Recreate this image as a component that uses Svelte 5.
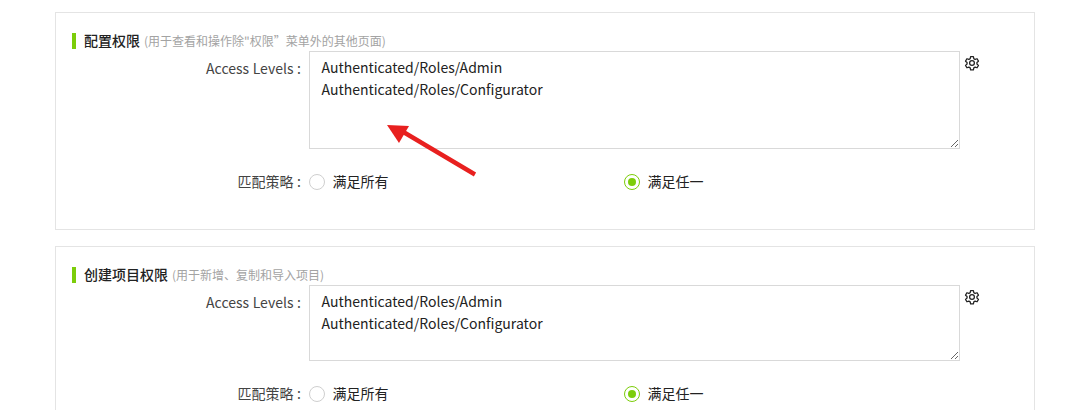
<script>
  const cards = [
    { title: '配置权限', hint: '(用于查看和操作除"权限”菜单外的其他页面)', cls: 'tall' },
    { title: '创建项目权限', hint: '(用于新增、复制和导入项目)', cls: 'short' }
  ];
  const value = 'Authenticated/Roles/Admin\nAuthenticated/Roles/Configurator';
</script>

<main class="page">
  {#each cards as card}
    <section class="card">
      <h3 class="heading"><span class="title">{card.title}</span><span class="hint">{card.hint}</span></h3>
      <div class="row levels">
        <span class="label">Access Levels :</span>
        <textarea class="area {card.cls}" readonly {value}></textarea>
        <svg class="gear" viewBox="0 0 24 24" width="16" height="16" fill="none" stroke="#222" stroke-width="1.9" stroke-linejoin="round">
          <path d="M9.9 2.5h4.2l.6 3 2 1.15 2.9-1 2.1 3.6-2.3 2v2.3l2.3 2-2.1 3.6-2.9-1-2 1.15-.6 3H9.9l-.6-3-2-1.15-2.9 1-2.1-3.6 2.3-2v-2.3l-2.3-2 2.1-3.6 2.9 1 2-1.15z"/>
          <circle cx="12" cy="12" r="3.6"/>
        </svg>
      </div>
      <div class="row match">
        <span class="label">匹配策略 :</span>
        <div class="options">
          <label class="option"><span class="radio"></span>满足所有</label>
          <label class="option"><span class="radio on"></span>满足任一</label>
        </div>
      </div>
    </section>
  {/each}
  <svg class="arrow" width="110" height="70" viewBox="380 118 110 70">
    <path d="M475 174.5 L400 130" stroke="#e8201f" stroke-width="4.4" fill="none"/>
    <polygon points="387,125 409,126 399,143" fill="#e8201f"/>
  </svg>
</main>

<style>
  :global(body) {
    margin: 0;
    background: #fff;
    font-family: "Noto Sans CJK SC", "Noto Sans", sans-serif;
    font-size: 14px;
    color: #333;
  }
  .page {
    position: relative;
    width: 980px;
    height: 398px;
    padding: 12px 55px 0;
    overflow: hidden;
  }
  .card {
    box-sizing: border-box;
    border: 1px solid #e4e4e4;
    height: 218px;
    padding: 20px 16px 0;
    margin-bottom: 16px;
  }
  .heading {
    display: flex;
    align-items: center;
    margin: 0;
    height: 16px;
    padding: 0 0 2px 8px;
    box-sizing: border-box;
    border-left: 4px solid #7ccd0a;
    font-weight: 400;
    font-size: 14px;
  }
  .title {
    color: #222;
    font-weight: 500;
    margin-right: 4px;
  }
  .hint {
    color: #a3a3a3;
    font-size: 12px;
  }
  .row {
    display: flex;
    margin-left: -16px;
  }
  .levels {
    margin-top: 2px;
    align-items: flex-start;
  }
  .label {
    box-sizing: border-box;
    width: 245px;
    flex: none;
    text-align: right;
    line-height: 22px;
    color: #444;
    word-spacing: 0.5px;
  }
  .levels .label {
    padding-top: 6px;
  }
  .area {
    box-sizing: border-box;
    display: block;
    width: 651px;
    margin: 0 0 0 8px;
    padding: 4px 11.5px;
    border: 1px solid #d9d9d9;
    border-radius: 0;
    outline: none;
    font: inherit;
    line-height: 22px;
    color: #222;
    background: #fff;
  }
  .tall { height: 98px; }
  .short { height: 76px; }
  .gear {
    margin: 4px 0 0 4px;
    flex: none;
  }
  .match {
    margin-top: 21px;
    align-items: center;
  }
  .options {
    display: flex;
    margin-left: 8px;
  }
  .option {
    display: flex;
    align-items: center;
    width: 315px;
    line-height: 22px;
    color: #222;
  }
  .radio {
    box-sizing: border-box;
    width: 16px;
    height: 16px;
    border: 1px solid #cfcfcf;
    border-radius: 50%;
    margin: 2px 7.5px 0 0;
    display: flex;
    align-items: center;
    justify-content: center;
  }
  .radio.on {
    border-color: #7ccd0a;
  }
  .radio.on::after {
    content: "";
    width: 8px;
    height: 8px;
    border-radius: 50%;
    background: #7ccd0a;
  }
  .arrow {
    position: absolute;
    left: 380px;
    top: 118px;
  }
</style>
